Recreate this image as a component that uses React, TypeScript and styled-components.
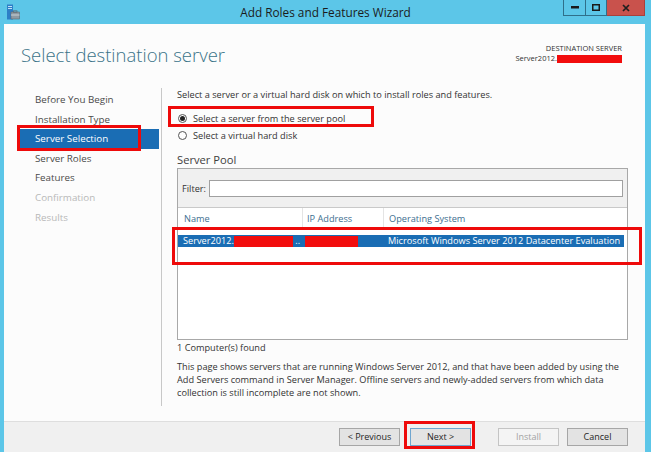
import React from 'react'
import styled, { createGlobalStyle } from 'styled-components'

const GlobalStyle = createGlobalStyle`
  html, body {
    margin: 0;
    padding: 0;
    background: #ffffff;
  }
  body {
    font-family: 'Open Sans', 'Noto Sans', 'Liberation Sans', sans-serif;
    color: #333333;
  }
`

const Window = styled.div`
  width: 651px;
  height: 452px;
  background: #5cc6e8;
  display: flex;
  flex-direction: column;
`

const TitleBar = styled.div`
  height: 24px;
  display: grid;
  grid-template-columns: 1fr auto 1fr;
  align-items: start;
`

const AppIcon = styled.div`
  padding: 4px 0 0 6px;
  height: 17px;
`

const Title = styled.div`
  font-size: 11.8px;
  line-height: 24px;
  color: #1b1b1b;
  white-space: nowrap;
`

const Controls = styled.div`
  display: flex;
  justify-content: flex-end;
  padding-right: 6px;
`

const CtrlButton = styled.div<{ close?: boolean; w: number }>`
  width: ${p => p.w}px;
  height: 16px;
  box-sizing: border-box;
  display: flex;
  align-items: center;
  justify-content: center;
  background: ${p => (p.close ? '#c9524c' : 'transparent')};
  border: 1px solid ${p => (p.close ? '#a9403b' : '#2f6f8a')};
  border-top: none;
  & + & {
    border-left: none;
  }
`

const Client = styled.div`
  flex: 1;
  margin: 0 6px 0 4px;
  background: #fcfcfc;
  display: flex;
  flex-direction: column;
`

const Header = styled.div`
  height: 64px;
  box-sizing: border-box;
  display: flex;
  justify-content: space-between;
  padding: 16px 23px 0 17px;
`

const PageTitle = styled.h1`
  margin: 0;
  font-size: 18.5px;
  font-weight: 300;
  color: #3a7388;
  line-height: 30px;
`

const DestBox = styled.div`
  text-align: right;
  font-size: 7.5px;
  line-height: 10px;
  color: #333;
  padding-top: 3px;
`

const Redact = styled.span<{ w: number; h?: number }>`
  display: inline-block;
  width: ${p => p.w}px;
  height: ${p => p.h ?? 9}px;
  background: #f20d0d;
  vertical-align: middle;
`

const Body = styled.div`
  flex: 1;
  display: flex;
`

const Nav = styled.div`
  width: 158px;
  box-sizing: border-box;
  padding: 2px 0 0 16px;
  margin-bottom: 15px;
  border-right: 1px solid #c8c8c8;
`

const NavItem = styled.div<{ state: 'done' | 'active' | 'todo' }>`
  position: relative;
  height: 19.6px;
  line-height: 19.6px;
  padding-left: 15px;
  margin-right: 2px;
  font-size: 9.8px;
  color: ${p => (p.state === 'todo' ? '#b8b8b8' : p.state === 'active' ? '#ffffff' : '#4a4a4a')};
  background: ${p => (p.state === 'active' ? '#1a6db4' : 'transparent')};
`

const Callout = styled.div<{ l: number; t: number; w: number; h: number }>`
  position: absolute;
  left: ${p => p.l}px;
  top: ${p => p.t}px;
  width: ${p => p.w}px;
  height: ${p => p.h}px;
  box-sizing: border-box;
  border: 3px solid #ee0a0a;
  pointer-events: none;
`

const Main = styled.div`
  flex: 1;
  padding: 1px 17px 0 15px;
  display: flex;
  flex-direction: column;
  font-size: 9.2px;
`

const Text = styled.div`
  line-height: 12px;
`

const Radios = styled.div`
  margin-top: 9px;
`

const RadioRow = styled.label`
  position: relative;
  height: 17px;
  display: flex;
  align-items: center;
  gap: 6px;
  padding-left: 1px;
`

const RadioDot = styled.span<{ checked?: boolean }>`
  width: 9px;
  height: 9px;
  box-sizing: border-box;
  border: 1px solid #555;
  border-radius: 50%;
  background: #fff;
  display: flex;
  align-items: center;
  justify-content: center;
  &::after {
    content: '';
    width: 5px;
    height: 5px;
    border-radius: 50%;
    background: ${p => (p.checked ? '#222' : 'transparent')};
  }
`

const Section = styled.div`
  margin-top: 8px;
  font-size: 11.2px;
  line-height: 16px;
  color: #3e3e3e;
`

const Panel = styled.div`
  position: relative;
  height: 172px;
  box-sizing: border-box;
  border: 1px solid #a8a8a8;
  background: #fff;
  display: flex;
  flex-direction: column;
`

const FilterBar = styled.div`
  height: 38px;
  background: #f0f0f0;
  border-bottom: 1px solid #c9c9c9;
  display: flex;
  align-items: center;
  gap: 3px;
  padding: 0 4px;
`

const FilterInput = styled.div`
  flex: 1;
  height: 17px;
  box-sizing: border-box;
  border: 1px solid #a0a0a0;
  background: #fff;
`

const Grid = styled.div`
  display: grid;
  grid-template-columns: 124px 81px 1fr;
`

const HeadCell = styled.div<{ pad: number }>`
  height: 22px;
  line-height: 22px;
  padding-left: ${p => p.pad}px;
  color: #3d6e8f;
  & + & {
    border-left: 1px solid #e4e4e4;
  }
`

const DataRow = styled(Grid)`
  margin-top: 5px;
  margin-right: 3px;
  background: #1a6db4;
  color: #fff;
  height: 12px;
  line-height: 12px;
  white-space: nowrap;
`

const DataCell = styled.div<{ pad: number }>`
  padding-left: ${p => p.pad}px;
  overflow: hidden;
`

const Count = styled.div`
  margin-top: 2px;
  line-height: 12px;
`

const Note = styled.p`
  margin: 6px 0 0;
  line-height: 13px;
`

const Footer = styled.div`
  height: 31px;
  box-sizing: border-box;
  background: #f0f0f0;
  border-top: 1px solid #dedede;
  display: flex;
  align-items: center;
  justify-content: flex-end;
  padding: 0 17px 1px 0;
`

const Button = styled.div<{ kind?: 'default' | 'disabled'; gap: number }>`
  position: relative;
  width: 61px;
  height: 18px;
  box-sizing: border-box;
  margin-left: ${p => p.gap}px;
  font-size: 9px;
  display: flex;
  align-items: center;
  justify-content: center;
  background: ${p => (p.kind === 'disabled' ? '#f4f4f4' : '#e3e3e3')};
  border: 1px solid
    ${p => (p.kind === 'default' ? '#6fa5cf' : p.kind === 'disabled' ? '#c4c4c4' : '#a6a6a6')};
  color: ${p => (p.kind === 'disabled' ? '#a3a3a3' : '#262626')};
`

const ServerIcon = () => (
  <svg width="14" height="17" viewBox="0 0 14 17">
    <rect x="1" y="0.5" width="6" height="15" fill="#2d7fc7" />
    <rect x="2" y="2" width="4" height="1" fill="#bfe0f7" />
    <rect x="2" y="4" width="4" height="1" fill="#bfe0f7" />
    <rect x="5" y="8" width="8.5" height="7" fill="#8e9aa3" stroke="#5d6870" strokeWidth="0.6" />
    <rect x="7.5" y="6.8" width="3.5" height="1.4" fill="none" stroke="#5d6870" strokeWidth="0.7" />
    <rect x="5" y="10.5" width="8.5" height="1" fill="#c7d0d6" />
  </svg>
)

const navItems: { label: string; state: 'done' | 'active' | 'todo' }[] = [
  { label: 'Before You Begin', state: 'done' },
  { label: 'Installation Type', state: 'done' },
  { label: 'Server Selection', state: 'active' },
  { label: 'Server Roles', state: 'done' },
  { label: 'Features', state: 'done' },
  { label: 'Confirmation', state: 'todo' },
  { label: 'Results', state: 'todo' },
]

export default function App() {
  return (
    <>
      <GlobalStyle />
      <Window>
        <TitleBar>
          <AppIcon>
            <ServerIcon />
          </AppIcon>
          <Title>Add Roles and Features Wizard</Title>
          <Controls>
            <CtrlButton w={23}>
              <svg width="8" height="3"><rect width="8" height="2.5" fill="#1a1a1a" /></svg>
            </CtrlButton>
            <CtrlButton w={21}>
              <svg width="8" height="7"><rect x="0.75" y="0.75" width="6.5" height="5.5" fill="none" stroke="#1a1a1a" strokeWidth="1.5" /></svg>
            </CtrlButton>
            <CtrlButton w={38} close>
              <svg width="8" height="8" viewBox="0 0 8 8">
                <path d="M1 1 L7 7 M7 1 L1 7" stroke="#1f1f1f" strokeWidth="1.7" />
              </svg>
            </CtrlButton>
          </Controls>
        </TitleBar>

        <Client>
          <Header>
            <PageTitle>Select destination server</PageTitle>
            <DestBox>
              <div>DESTINATION SERVER</div>
              <div>
                Server2012.<Redact w={65} h={8} />
              </div>
            </DestBox>
          </Header>

          <Body>
            <Nav>
              {navItems.map(item => (
                <NavItem key={item.label} state={item.state}>
                  {item.label}
                  {item.state === 'active' && <Callout l={-3} t={-4} w={124} h={26} />}
                </NavItem>
              ))}
            </Nav>

            <Main>
              <Text>Select a server or a virtual hard disk on which to install roles and features.</Text>
              <Radios>
                <RadioRow>
                  <RadioDot checked />
                  Select a server from the server pool
                  <Callout l={-9} t={-4} w={206} h={21} />
                </RadioRow>
                <RadioRow>
                  <RadioDot />
                  Select a virtual hard disk
                </RadioRow>
              </Radios>

              <Section>Server Pool</Section>
              <Panel>
                <FilterBar>
                  <span>Filter:</span>
                  <FilterInput />
                </FilterBar>
                <Grid>
                  <HeadCell pad={6}>Name</HeadCell>
                  <HeadCell pad={4}>IP Address</HeadCell>
                  <HeadCell pad={5}>Operating System</HeadCell>
                </Grid>
                <DataRow>
                  <DataCell pad={5}>
                    Server2012.<Redact w={59} h={11} /> ..
                  </DataCell>
                  <DataCell pad={3}>
                    <Redact w={53} h={11} />
                  </DataCell>
                  <DataCell pad={5}>Microsoft Windows Server 2012 Datacenter Evaluation</DataCell>
                </DataRow>
                <Callout l={-6} t={58} w={470} h={38} />
              </Panel>

              <Count>1 Computer(s) found</Count>
              <Note>
                This page shows servers that are running Windows Server 2012, and that have been added by using the
                Add Servers command in Server Manager. Offline servers and newly-added servers from which data
                collection is still incomplete are not shown.
              </Note>
            </Main>
          </Body>

          <Footer>
            <Button gap={0}>&lt; Previous</Button>
            <Button gap={10} kind="default">
              Next &gt;
              <Callout l={-7} t={-8} w={71} h={28} />
            </Button>
            <Button gap={27} kind="disabled">Install</Button>
            <Button gap={8}>Cancel</Button>
          </Footer>
        </Client>
      </Window>
    </>
  )
}
